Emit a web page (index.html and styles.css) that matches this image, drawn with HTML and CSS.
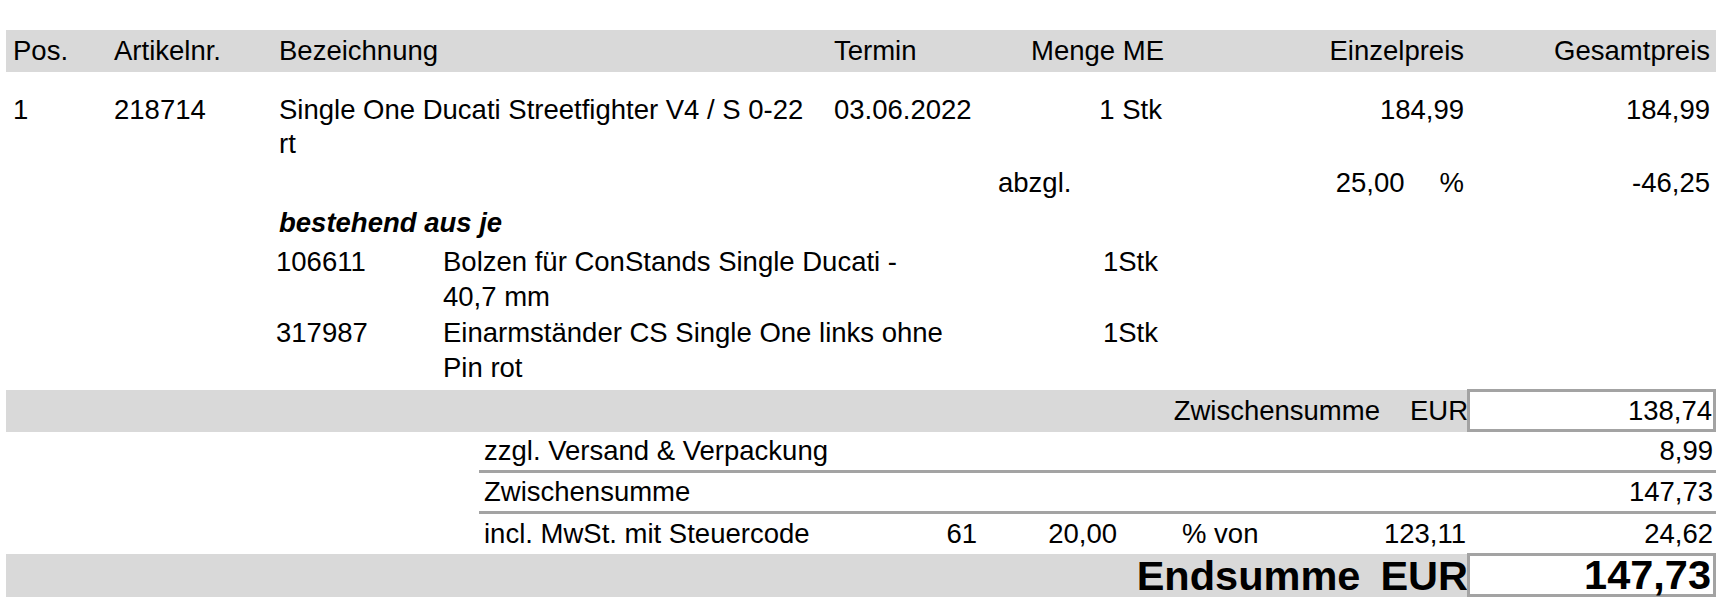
FILE: index.html
```html
<!DOCTYPE html>
<html lang="de">
<head>
<meta charset="utf-8">
<title>Beleg</title>
<link rel="stylesheet" href="styles.css">
</head>
<body>
<div class="page">
  <div class="grid head">
    <div>Pos.</div>
    <div>Artikelnr.</div>
    <div>Bezeichnung</div>
    <div>Termin</div>
    <div class="r">Menge ME</div>
    <div class="r">Einzelpreis</div>
    <div class="r">Gesamtpreis</div>
  </div>

  <div class="grid line item">
    <div>1</div>
    <div>218714</div>
    <div>Single One Ducati Streetfighter V4 / S 0-22<br>rt</div>
    <div>03.06.2022</div>
    <div class="r qty">1 Stk</div>
    <div class="r">184,99</div>
    <div class="r">184,99</div>
  </div>

  <div class="grid line discount">
    <div></div><div></div><div></div><div></div>
    <div class="abzgl">abzgl.</div>
    <div class="pct"><span>25,00</span><span>%</span></div>
    <div class="r">-46,25</div>
  </div>

  <div class="grid line consist">
    <div></div><div></div>
    <div class="bi">bestehend aus je</div>
  </div>

  <div class="sub first">
    <div></div>
    <div>106611</div>
    <div>Bolzen für ConStands Single Ducati -<br>40,7 mm</div>
    <div class="r">1Stk</div>
  </div>
  <div class="sub second">
    <div></div>
    <div>317987</div>
    <div>Einarmständer CS Single One links ohne<br>Pin rot</div>
    <div class="r">1Stk</div>
  </div>

  <div class="bar subtotal">
    <span>Zwischensumme</span>
    <span class="cur">EUR</span>
    <div class="box">138,74</div>
  </div>

  <div class="tax">
    <div class="trow ruled">
      <div class="lbl span">zzgl. Versand &amp; Verpackung</div>
      <div class="r amt">8,99</div>
    </div>
    <div class="trow ruled">
      <div class="lbl span">Zwischensumme</div>
      <div class="r amt">147,73</div>
    </div>
    <div class="trow last">
      <div class="lbl">incl. MwSt. mit Steuercode</div>
      <div class="r">61</div>
      <div class="r">20,00</div>
      <div class="von">% von</div>
      <div class="r">123,11</div>
      <div class="r amt">24,62</div>
    </div>
  </div>

  <div class="bar total">
    <span>Endsumme</span>
    <span class="cur">EUR</span>
    <div class="box">147,73</div>
  </div>
</div>
</body>
</html>
```

FILE: styles.css
```css
html, body {
  margin: 0;
  padding: 0;
  background: #ffffff;
  overflow: hidden;
}

body {
  font-family: "Liberation Sans", Arial, sans-serif;
  font-size: 27.5px;
  color: #000000;
}

.page {
  width: 1710px;
  margin-left: 6px;
  padding-top: 30px;
}

.grid {
  display: grid;
  grid-template-columns: 101px 165px 555px 166px 164px 300px 246px;
  padding: 0 6px 0 7px;
}

.r {
  text-align: right;
}

.head {
  background: #d9d9d9;
  height: 42px;
  line-height: 42px;
}

.line {
  line-height: 34px;
}

.item {
  margin-top: 21px;
}

.qty {
  margin-right: 2px;
}

.discount {
  margin-top: 5px;
}

.abzgl {
  margin-left: -2px;
}

.pct {
  display: flex;
  justify-content: flex-end;
  gap: 35px;
  margin-right: 0;
}

.consist {
  margin-top: 6px;
}

.bi {
  font-weight: bold;
  font-style: italic;
}

.sub {
  display: grid;
  grid-template-columns: 263px 167px 557px 158px;
  padding-left: 7px;
  line-height: 35px;
}

.sub.first {
  margin-top: 4px;
}

.sub.second {
  margin-top: 1px;
}

.bar {
  display: flex;
  justify-content: flex-end;
  align-items: flex-start;
  background: #d9d9d9;
  height: 42px;
}

.subtotal {
  margin-top: 5px;
  line-height: 42px;
}

.subtotal .cur {
  margin-left: 30px;
}

.box {
  box-sizing: border-box;
  width: 249px;
  margin-top: -1px;
  margin-left: -1px;
  border: 3px solid #a3a3a3;
  background: #ffffff;
  text-align: right;
  padding-right: 1px;
}

.subtotal .box {
  height: 43px;
  line-height: 37px;
}

.tax {
  margin-left: 473px;
  width: 1237px;
}

.trow {
  display: grid;
  grid-template-columns: 421px 77px 140px 183px 166px 250px;
  height: 38px;
  line-height: 38px;
}

.trow.ruled {
  border-bottom: 3px solid #a3a3a3;
}

.trow.last {
  height: 40px;
  line-height: 40px;
}

.lbl {
  padding-left: 5px;
}

.span {
  grid-column: 1 / 6;
}

.amt {
  padding-right: 3px;
}

.von {
  padding-left: 65px;
}

.total {
  height: 43px;
  font-weight: bold;
  font-size: 41.5px;
  line-height: 43px;
}

.total .cur {
  margin-left: 20px;
}

.total .box {
  height: 44px;
  line-height: 38px;
  padding-right: 2px;
}
```
